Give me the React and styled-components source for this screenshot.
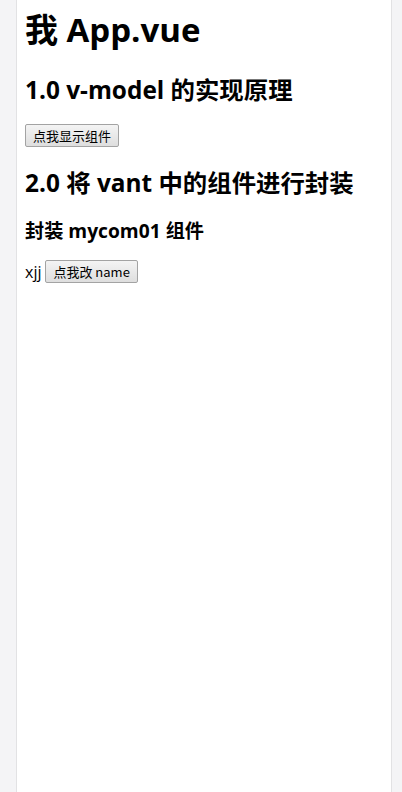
import React, { useState } from 'react';
import styled, { createGlobalStyle } from 'styled-components';

const GlobalStyle = createGlobalStyle`
  html, body {
    margin: 0;
    padding: 0;
    height: 100%;
    background: #f4f4f6;
  }
  #root {
    height: 100%;
  }
`;

const Page = styled.div`
  display: flex;
  min-height: 100vh;
  padding-left: 16px;
  box-sizing: border-box;
`;

const Column = styled.main`
  width: 376px;
  min-height: 100vh;
  box-sizing: border-box;
  background: #fff;
  border-left: 1px solid #e2e2e4;
  border-right: 1px solid #e2e2e4;
  padding: 9px 8px 0 8px;
  font-family: "Open Sans", "Noto Sans CJK SC", sans-serif;
  color: #000;
`;

const Title = styled.h1`
  margin: 0;
  font-size: 33px;
  line-height: 42px;
  font-weight: 700;
`;

const Heading = styled.h2`
  margin: ${({ $top }) => $top}px 0 0;
  font-size: 24.4px;
  line-height: 32px;
  font-weight: 700;
`;

const SubHeading = styled.h3`
  margin: 19px 0 0;
  font-size: 19.2px;
  line-height: 26px;
  font-weight: 700;
`;

const Row = styled.div`
  display: flex;
  align-items: center;
  gap: 4px;
  margin-top: ${({ $top }) => $top}px;
  font-size: 16px;
  line-height: 22px;
`;

const Button = styled.button`
  font-family: "Noto Sans CJK SC", "Open Sans", sans-serif;
  font-size: 13px;
  line-height: 19px;
  height: 23px;
  padding: 0 7px;
  color: #000;
  border: 1px solid #a3a3a3;
  border-radius: 2px;
  background: linear-gradient(#f4f4f4, #dedede);
  cursor: pointer;
`;

export default function App() {
  const [name, setName] = useState('xjj');
  const [shown, setShown] = useState(false);

  return (
    <>
      <GlobalStyle />
      <Page>
        <Column>
          <Title>我 App.vue</Title>
          <Heading $top={23}>1.0 v-model 的实现原理</Heading>
          <Row $top={18}>
            <Button onClick={() => setShown(!shown)}>点我显示组件</Button>
          </Row>
          <Heading $top={20}>2.0 将 vant 中的组件进行封装</Heading>
          <SubHeading>封装 mycom01 组件</SubHeading>
          <Row $top={16}>
            <span>{name}</span>
            <Button onClick={() => setName(name === 'xjj' ? 'name' : 'xjj')}>点我改 name</Button>
          </Row>
        </Column>
      </Page>
    </>
  );
}
